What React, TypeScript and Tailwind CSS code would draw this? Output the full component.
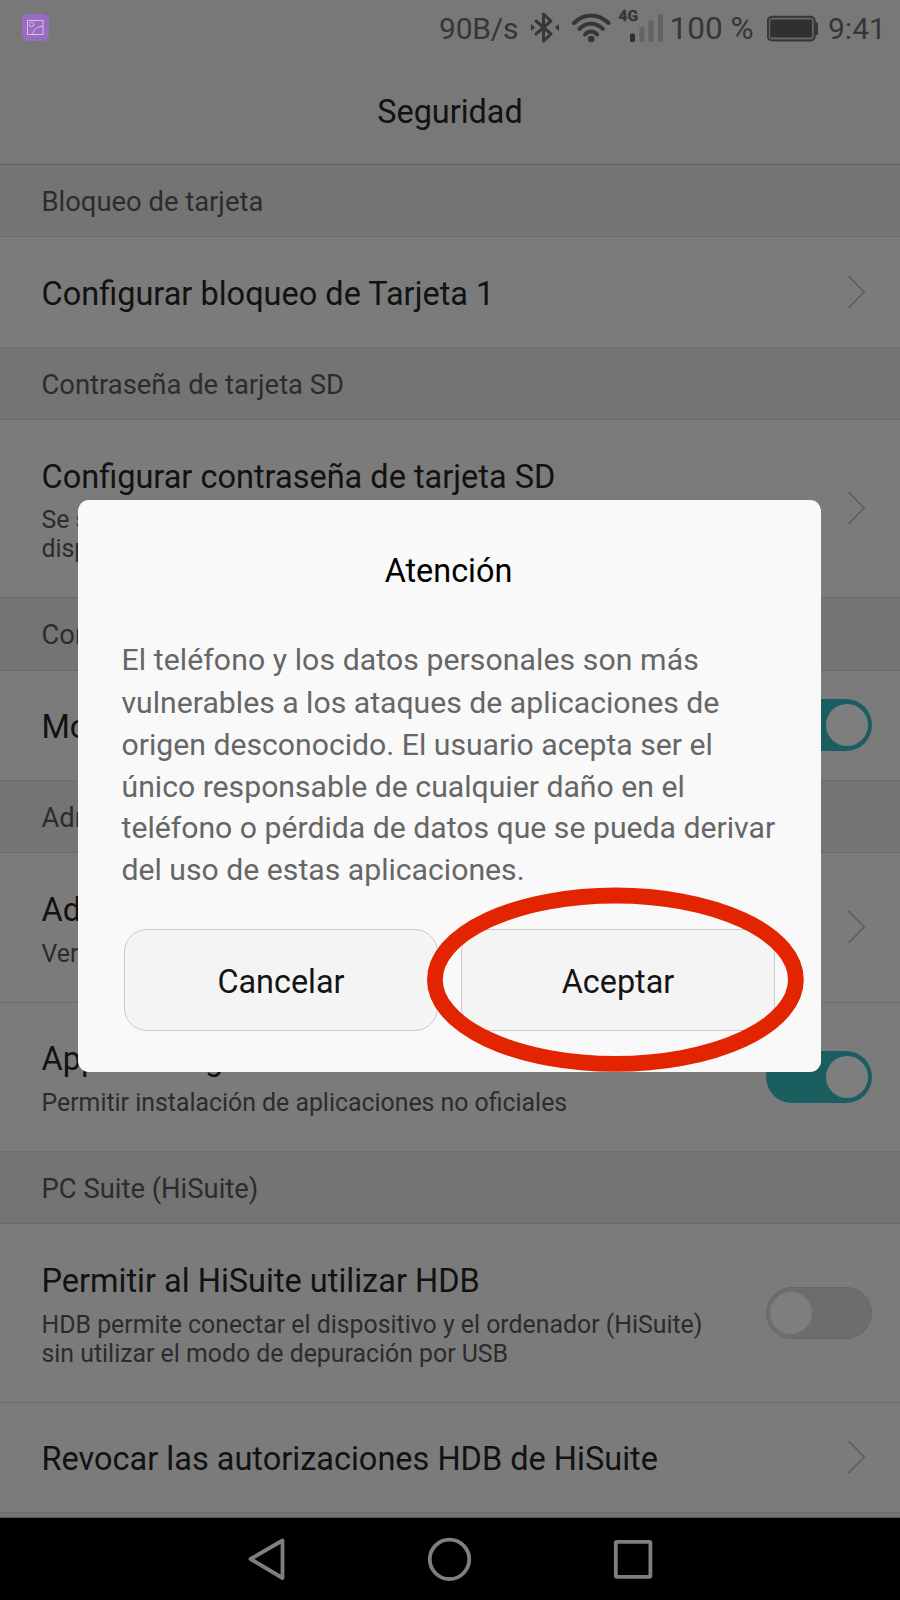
import type { ReactNode } from "react";

function Chevron() {
  return (
    <svg width="20" height="36" viewBox="0 0 20 36" fill="none" className="mr-[34px] mb-px shrink-0">
      <path d="M2.5 2 L18.2 18 L2.5 34" stroke="#595959" strokeWidth="1.4" />
    </svg>
  );
}

function Toggle({ on }: { on: boolean }) {
  return on ? (
    <div className="mr-[28px] mb-px flex h-[52px] w-[106px] shrink-0 items-center justify-end rounded-full bg-[#1b5e60] pr-1">
      <div className="size-[42px] rounded-full bg-[#7e7e7e]" />
    </div>
  ) : (
    <div className="mr-[28px] mb-px flex h-[52px] w-[106px] shrink-0 items-center rounded-full border border-[#686868] bg-[#6d6d6d] pl-[3px]">
      <div className="size-[42px] rounded-full bg-[#7e7e7e]" />
    </div>
  );
}

function Section({ children, height }: { children: ReactNode; height: string }) {
  return (
    <div className={`${height} shrink-0 border-b border-[#6a6a6a] bg-[#747474] pl-[41.5px] pt-[19px]`}>
      <div className="text-[27.4px] leading-[36px] whitespace-nowrap text-[#2c2c2c]">{children}</div>
    </div>
  );
}

interface RowProps {
  title: string;
  summary?: string[];
  height: string;
  end: ReactNode;
  top?: string;
  gap?: string;
}

function Row({ title, summary, height, end, top = "pt-[38px]", gap = "mt-[10px]" }: RowProps) {
  return (
    <div className={`${height} flex shrink-0 items-center justify-between border-b border-[#6c6c6c] bg-[#7b7b7b]`}>
      <div className={`${top} self-start pl-[41.5px]`}>
        <div className="text-[32.5px] leading-[38px] whitespace-nowrap text-[#121212]">{title}</div>
        {summary && (
          <div className={`${gap} text-[24.85px] leading-[29.2px] whitespace-nowrap text-[#2c2c2c]`}>
            {summary.map((line) => (
              <div key={line}>{line}</div>
            ))}
          </div>
        )}
      </div>
      {end}
    </div>
  );
}

function StatusBar() {
  return (
    <div className="flex h-[60px] items-start text-[30px] leading-[36px] whitespace-pre text-[#363636]">
      <svg width="27" height="27" viewBox="0 0 27 27" fill="none" className="mt-[14px] ml-[22px]">
        <rect width="27" height="27" rx="6" fill="#9a6ac4" />
        <g stroke="#cfc6d8" strokeWidth="1">
          <rect x="5.5" y="6.5" width="15.5" height="14" />
          <circle cx="9.6" cy="10.4" r="2.2" />
          <path d="M10.5 20.5 C11.5 15.5 15.5 12.4 21 12.2" />
        </g>
      </svg>
      <div className="mt-[11px] ml-[390px] w-[80px] tracking-[-0.2px]">90B/s</div>
      <svg width="148" height="60" viewBox="519 0 148 60" className="shrink-0" fill="none">
        <path
          d="M536 21 L551 34 L543.5 41 V14 L551 21 L536 34"
          stroke="#363636"
          strokeWidth="3"
          strokeLinejoin="round"
          strokeLinecap="round"
        />
        <path d="M531 24 V31 L535 27.5 Z M559 24 V31 L555 27.5 Z" fill="#363636" />
        <g stroke="#363636" strokeWidth="4" strokeLinecap="round">
          <path d="M574 23 C584 13 598 13 608.5 23" />
          <path d="M579.5 28.8 C586 22 596 22 602.8 28.8" />
          <path d="M585 34.5 C588.5 30.5 593.5 30.5 597.2 34.5" />
        </g>
        <circle cx="591.2" cy="39" r="3.3" fill="#363636" />
        <text x="618.5" y="20.7" fontSize="15.5" fontWeight="700" fill="#363636" stroke="#363636" strokeWidth="0.4">4G</text>
        <rect x="630" y="33.5" width="5" height="8.5" rx="1.5" fill="#303030" />
        <rect x="639.5" y="27" width="5" height="15" rx="1.5" fill="#636363" />
        <rect x="648.5" y="20.5" width="5" height="21.5" rx="1.5" fill="#636363" />
        <rect x="658" y="14" width="5" height="28" rx="1.5" fill="#636363" />
      </svg>
      <div className="mt-[11px] ml-[2.5px] w-[97px] text-[31.6px]">100 %</div>
      <svg width="52" height="27" viewBox="0 0 52 27" fill="none" className="mt-[15px] shrink-0">
        <rect x="0.9" y="1.8" width="46.8" height="23.6" rx="4" stroke="#363636" strokeWidth="2" fill="#656565" />
        <rect x="3.2" y="4.6" width="41.8" height="17.8" fill="#303030" />
        <rect x="48" y="7.5" width="3" height="12.5" rx="1" fill="#363636" />
      </svg>
      <div className="mt-[11px] ml-[9.5px]">9:41</div>
    </div>
  );
}

const message = [
  "vulnerables a los ataques de aplicaciones de",
  "origen desconocido. El usuario acepta ser el",
  "único responsable de cualquier daño en el",
  "teléfono o pérdida de datos que se pueda derivar",
  "del uso de estas aplicaciones.",
];

function Dialog() {
  return (
    <div className="absolute top-[500px] left-[78px] h-[572px] w-[743px] rounded-[11px] bg-[#f9f9f9]">
      <div className="pt-[52px] text-center text-[32.4px] leading-[38px] text-black">
        <span className="relative -left-px">Atención</span>
      </div>
      <div className="mt-[49px] pl-[43.5px] text-[30.2px] leading-[41.7px] whitespace-nowrap text-[#666]">
        <div className="mb-[1.5px] tracking-[0.08px]">El teléfono y los datos personales son más</div>
        {message.map((line) => (
          <div key={line}>{line}</div>
        ))}
      </div>
      <div className="mt-[38px] ml-[46px] flex gap-[23px] text-[32.4px] leading-[38px] text-[#141414]">
        <button className="h-[102px] w-[314px] rounded-[23px] border border-[#cacaca] bg-[#f4f4f4] pt-[4px]">Cancelar</button>
        <button className="h-[102px] w-[314px] rounded-[23px] border border-[#cacaca] bg-[#f4f4f4] pt-[4px]">Aceptar</button>
      </div>
      <svg className="absolute top-[386px] left-[347px]" width="382" height="188" viewBox="425 886 382 188" fill="none">
        <ellipse cx="615.4" cy="979.7" rx="180.5" ry="84.2" stroke="#e22400" strokeWidth="15.8" />
      </svg>
    </div>
  );
}

function NavigationBar() {
  return (
    <div className="flex h-[82px] shrink-0 items-center bg-black">
      <svg width="900" height="82" viewBox="0 0 900 82" fill="none" stroke="#7f7f7f" strokeWidth="3.8" strokeLinejoin="round">
        <path d="M250.5 41 L282.5 22.5 V60 Z" />
        <circle cx="449.5" cy="41.3" r="19.7" />
        <rect x="615.8" y="23.8" width="34.6" height="35" rx="1" />
      </svg>
    </div>
  );
}

export default function App() {
  return (
    <div className="relative flex h-[1600px] w-[900px] flex-col overflow-hidden bg-[#787878] font-[Roboto,sans-serif]">
      <div className="h-[165px] shrink-0 border-b border-[#5e5e5e]">
        <StatusBar />
        <div className="pt-[33px] text-center text-[32.4px] leading-[38px] text-[#121212]">Seguridad</div>
      </div>
      <Section height="h-[72px]">Bloqueo de tarjeta</Section>
      <Row height="h-[111px]" title="Configurar bloqueo de Tarjeta 1" end={<Chevron />} />
      <Section height="h-[72px]">Contraseña de tarjeta SD</Section>
      <Row
        height="h-[178px]"
        title="Configurar contraseña de tarjeta SD"
        summary={["Se solicitará la contraseña al utilizar la tarjeta en otro", "dispositivo"]}
        end={<Chevron />}
        gap="mt-[9px]"
      />
      <Section height="h-[73px]">Contraseña</Section>
      <Row height="h-[110px]" title="Mostrar contraseñas" end={<Toggle on />} top="pt-[37px]" />
      <Section height="h-[72px]">Administración de dispositivos</Section>
      <Row
        height="h-[150px]"
        title="Administradores de dispositivos"
        summary={["Ver o desactivar administradores"]}
        end={<Chevron />}
      />
      <Row
        height="h-[149px]"
        title="Apps de origen desconocido"
        summary={["Permitir instalación de aplicaciones no oficiales"]}
        end={<Toggle on />}
        top="pt-[37px]"
      />
      <Section height="h-[72px]">PC Suite (HiSuite)</Section>
      <Row
        height="h-[179px]"
        title="Permitir al HiSuite utilizar HDB"
        summary={["HDB permite conectar el dispositivo y el ordenador (HiSuite)", "sin utilizar el modo de depuración por USB"]}
        end={<Toggle on={false} />}
        gap="mt-[9.5px]"
      />
      <Row height="h-[110px]" title="Revocar las autorizaciones HDB de HiSuite" end={<Chevron />} top="pt-[37px]" />
      <div className="h-[5px] shrink-0 border-b border-[#555] bg-[#747474]" />
      <NavigationBar />
      <Dialog />
    </div>
  );
}
